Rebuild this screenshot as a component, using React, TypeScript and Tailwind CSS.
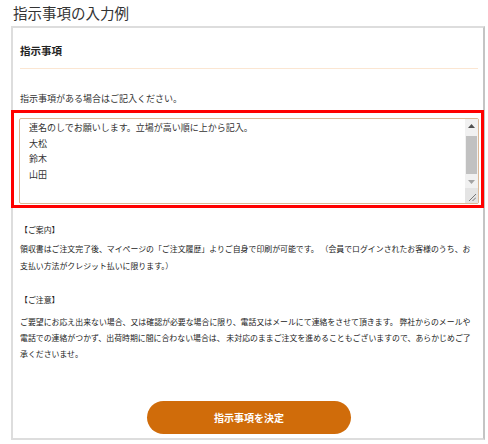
import React from "react";

const font = { fontFamily: '"Noto Sans CJK JP", "Noto Sans", sans-serif' };

function FakeScrollbar() {
  return (
    <div className="flex w-[13px] shrink-0 flex-col bg-[#f1f1f1]">
      <div className="flex h-[14px] items-center justify-center">
        <svg width="7" height="4" viewBox="0 0 7 4">
          <polygon points="0,4 3.5,0 7,4" fill="#505050" />
        </svg>
      </div>
      <div className="mx-[1px] mt-[3px] h-[38px] bg-[#c1c1c1]" />
      <div className="mt-[1px] flex h-[13px] items-center justify-center">
        <svg width="7" height="4" viewBox="0 0 7 4">
          <polygon points="0,0 3.5,4 7,0" fill="#a3a3a3" />
        </svg>
      </div>
      <div className="flex-1 bg-[#e4e4e4] flex items-end justify-end p-[2px]">
        <svg width="8" height="8" viewBox="0 0 8 8">
          <line x1="1" y1="8" x2="8" y2="1" stroke="#777" strokeWidth="1" />
          <line x1="4.5" y1="8" x2="8" y2="4.5" stroke="#777" strokeWidth="1" />
        </svg>
      </div>
    </div>
  );
}

export default function App() {
  return (
    <div className="relative h-[444px] w-[488px] overflow-hidden bg-white text-[#333]" style={font}>
      <h1 className="h-[26px] pl-[13px] pt-[2px] text-[14.5px] leading-[22px] font-normal text-[#333]">
        指示事項の入力例
      </h1>
      <div className="ml-[11px] flex h-[414px] w-[474px] flex-col border-2 border-[#dddddd] border-r-[#c4c4c4] pl-[7px] pr-[5px]">
        <div className="pt-[15px] text-[10.5px] font-bold leading-[16px] text-[#222]">指示事項</div>
        <div className="mt-[9px] h-[1px] bg-[#fbe6d2]" />
        <div className="mt-[23px] text-[9px] leading-[14px]">指示事項がある場合はご記入ください。</div>
        <div className="ml-[-1px] mt-[12px] flex h-[86px] w-[460px] rounded-[2px] border border-[#dcb896] bg-white">
          <div className="flex-1 pl-[9px] pt-[1px] text-[9px] leading-[15.6px] text-[#333]">
            <div>連名のしでお願いします。立場が高い順に上から記入。</div>
            <div>大松</div>
            <div>鈴木</div>
            <div>山田</div>
          </div>
          <FakeScrollbar />
        </div>
        <div className="mt-[18px] text-[7.9px] leading-[16px] text-[#222]">【ご案内】</div>
        <div className="mt-[2px] whitespace-nowrap text-[7.9px] leading-[17px] text-[#222]">
          領収書はご注文完了後、マイページの「ご注文履歴」よりご自身で印刷が可能です。 （会員でログインされたお客様のうち、お
          <br />
          支払い方法がクレジット払いに限ります。）
        </div>
        <div className="mt-[18px] text-[7.9px] leading-[16px] text-[#222]">【ご注意】</div>
        <div className="mt-[6px] whitespace-nowrap text-[7.9px] leading-[16px] text-[#222]">
          ご要望にお応え出来ない場合、又は確認が必要な場合に限り、電話又はメールにて連絡をさせて頂きます。 弊社からのメールや
          <br />
          電話での連絡がつかず、出荷時期に間に合わない場合は、 未対応のままご注文を進めることもございますので、あらかじめご了
          <br />
          承くださいませ。
        </div>
        <div className="mt-auto mb-[4px] flex justify-center">
          <button className="h-[33px] w-[204px] rounded-full bg-[#d06c0a] text-[10px] font-bold text-white">
            指示事項を決定
          </button>
        </div>
      </div>
      <div className="pointer-events-none absolute left-[11px] top-[110px] h-[98px] w-[473px] border-[3px] border-[#ff0000]" />
    </div>
  );
}
